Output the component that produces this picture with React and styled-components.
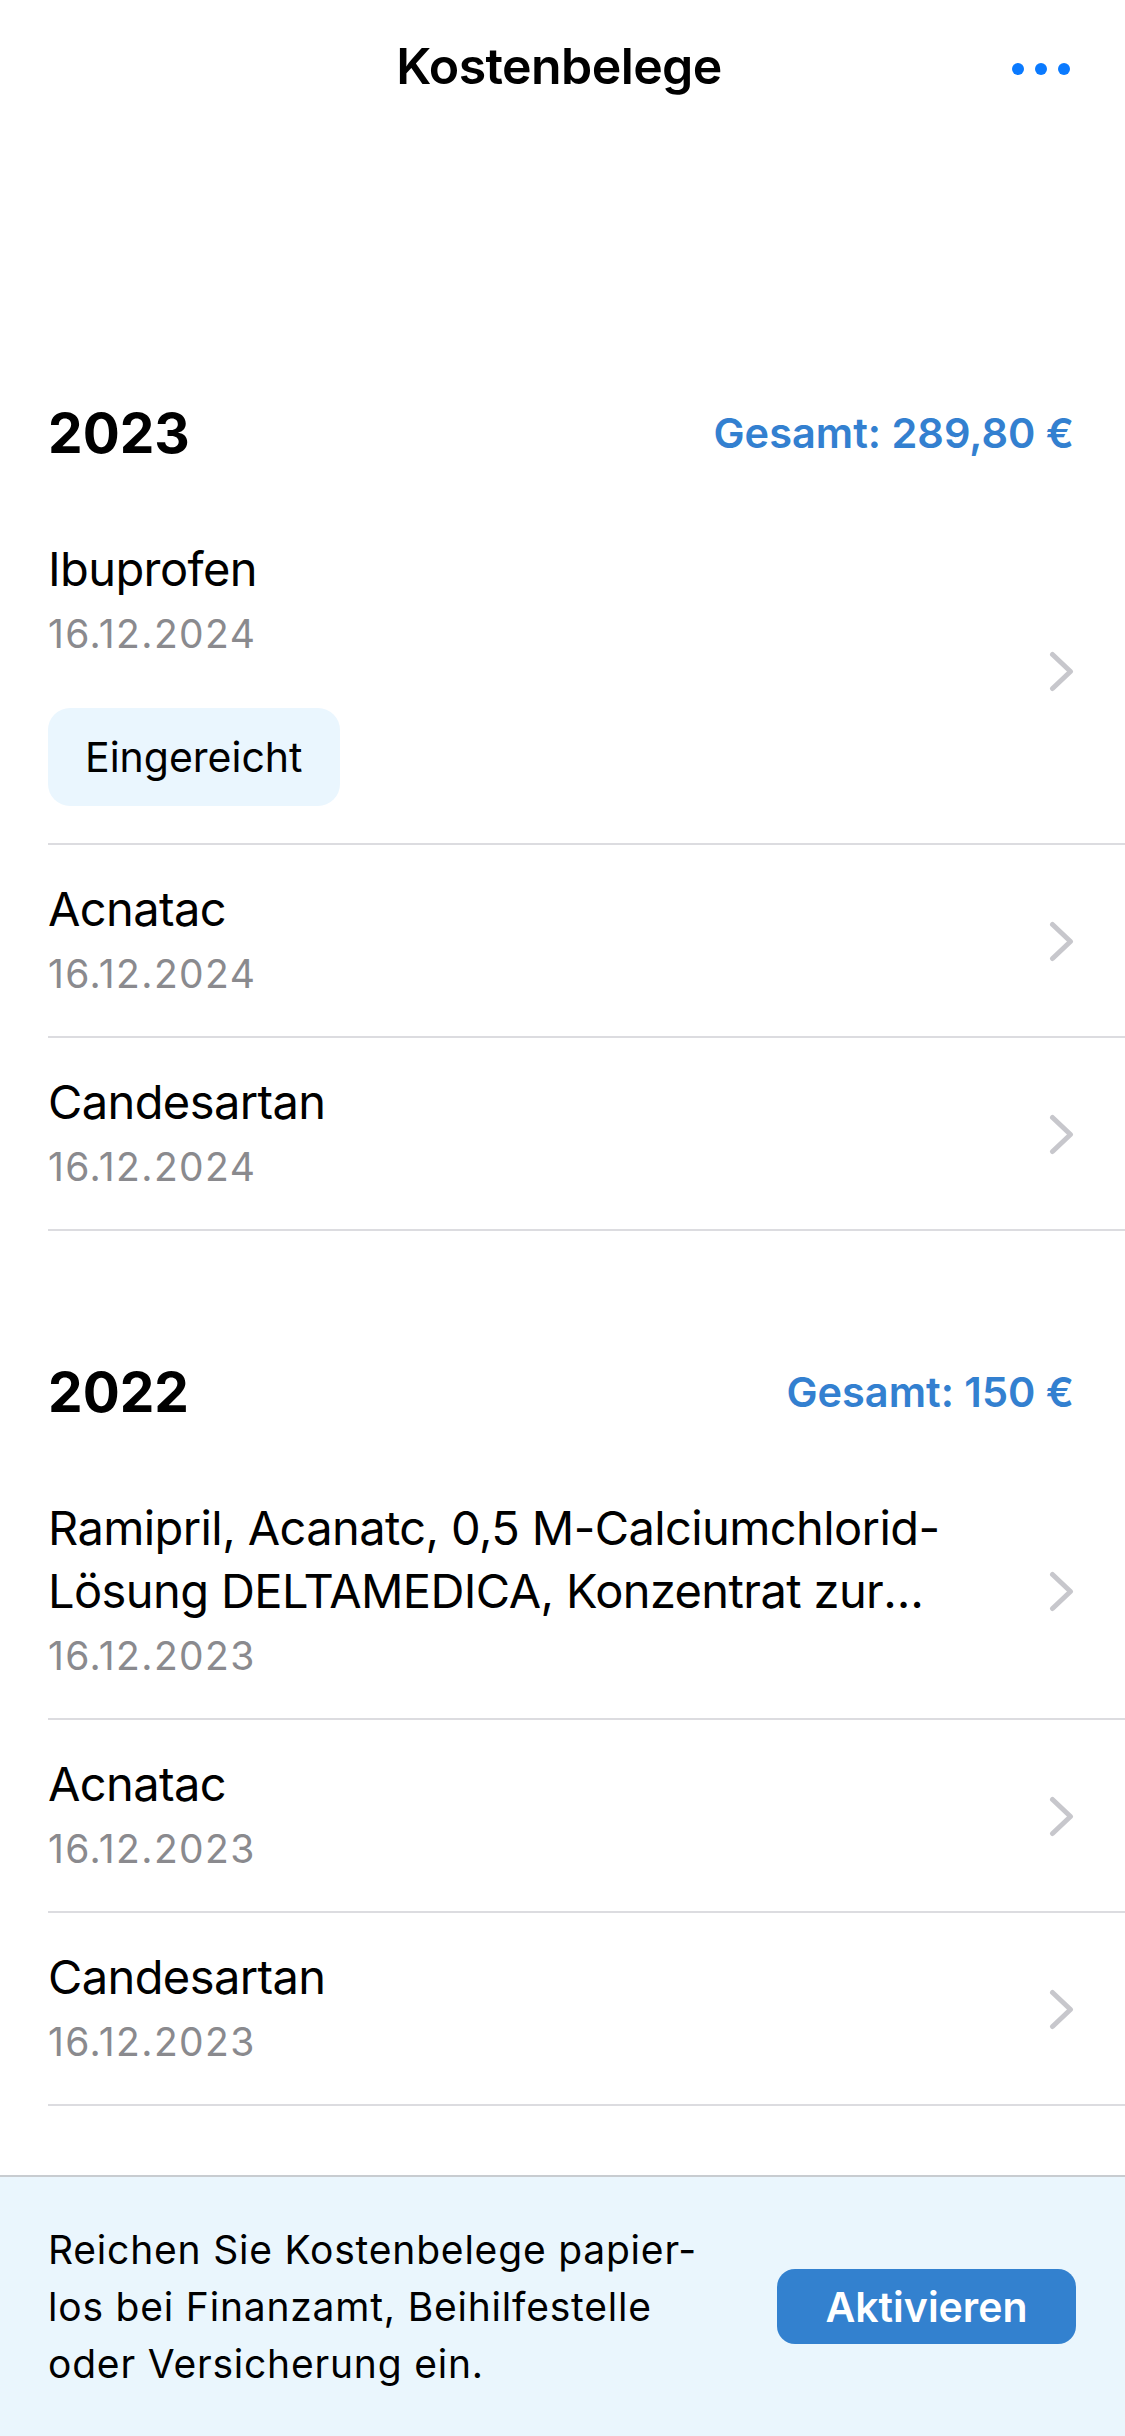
import React from "react";
import styled, { createGlobalStyle } from "styled-components";

const sections = [
  {
    year: "2023",
    total: "Gesamt: 289,80 €",
    items: [
      { name: "Ibuprofen", date: "16.12.2024", status: "Eingereicht" },
      { name: "Acnatac", date: "16.12.2024" },
      { name: "Candesartan", date: "16.12.2024" },
    ],
  },
  {
    year: "2022",
    total: "Gesamt: 150 €",
    items: [
      {
        name:
          "Ramipril, Acanatc, 0,5 M-Calciumchlorid-Lösung DELTAMEDICA, Konzentrat zur Herstellung einer Infusionslösung",
        date: "16.12.2023",
      },
      { name: "Acnatac", date: "16.12.2023" },
      { name: "Candesartan", date: "16.12.2023" },
    ],
  },
];

const Chevron = () => (
  <ChevronBox>
    <svg width="25" height="41" viewBox="0 0 25 41">
      <polyline
        points="3.5,3.5 21.5,20.5 3.5,37.5"
        fill="none"
        stroke="#C7C7CC"
        strokeWidth="5"
        strokeLinecap="round"
        strokeLinejoin="round"
      />
    </svg>
  </ChevronBox>
);

const App = () => {
  return (
    <Page>
      <GlobalStyle />
      <Header>
        <span />
        <Title>Kostenbelege</Title>
        <MoreButton aria-label="Mehr">
          <Dot />
          <Dot />
          <Dot />
        </MoreButton>
      </Header>

      <List>
        {sections.map((section) => (
          <Section key={section.year}>
            <SectionHeader>
              <Year>{section.year}</Year>
              <Total>{section.total}</Total>
            </SectionHeader>
            {section.items.map((item, i) => (
              <Row key={i} hasBadge={!!item.status}>
                <RowText>
                  <ItemName>{item.name}</ItemName>
                  <ItemDate>{item.date}</ItemDate>
                  {item.status && <Badge>{item.status}</Badge>}
                </RowText>
                <Chevron />
              </Row>
            ))}
          </Section>
        ))}
      </List>

      <Banner>
        <BannerText>
          Reichen Sie Kostenbelege papier-
          <br />
          los bei Finanzamt, Beihilfestelle
          <br />
          oder Versicherung ein.
        </BannerText>
        <ActivateButton>Aktivieren</ActivateButton>
      </Banner>
    </Page>
  );
};

export default App;

const GlobalStyle = createGlobalStyle`
  html, body {
    margin: 0;
    padding: 0;
    background: #ffffff;
  }
  body {
    font-family: Inter, "Noto Sans", "Liberation Sans", sans-serif;
    color: #000000;
    -webkit-font-smoothing: antialiased;
  }
`;

const Page = styled.div`
  width: 1125px;
  min-height: 2436px;
  display: flex;
  flex-direction: column;
  background: #ffffff;
`;

const Header = styled.header`
  display: grid;
  grid-template-columns: 1fr auto 1fr;
  align-items: center;
  padding: 36px 55px 0 48px;
`;

const Title = styled.h1`
  margin: 0;
  font-size: 50px;
  line-height: 60px;
  font-weight: 600;
  letter-spacing: -0.6px;
`;

const MoreButton = styled.div`
  justify-self: end;
  display: flex;
  gap: 11px;
  align-items: center;
  padding-top: 6px;
`;

const Dot = styled.span`
  width: 12px;
  height: 12px;
  border-radius: 50%;
  background: #0a7aff;
`;

const List = styled.main`
  display: flex;
  flex-direction: column;
  gap: 128px;
  padding: 304px 0 0 48px;
`;

const Section = styled.section`
  display: flex;
  flex-direction: column;
`;

const SectionHeader = styled.div`
  display: flex;
  align-items: center;
  justify-content: space-between;
  padding-right: 51px;
  margin-bottom: 39px;
`;

const Year = styled.h2`
  margin: 0;
  font-size: 55px;
  line-height: 66px;
  font-weight: 700;
`;

const Total = styled.span`
  font-size: 41.5px;
  line-height: 50px;
  font-weight: 600;
  color: #3380d0;
`;

const Row = styled.div`
  display: flex;
  align-items: center;
  gap: 40px;
  padding: ${({ hasBadge }) => (hasBadge ? "32px 51px 37px 0" : "32px 51px 31px 0")};
  border-bottom: 2px solid #dcdce0;
`;

const RowText = styled.div`
  flex: 1;
  min-width: 0;
  display: flex;
  flex-direction: column;
  align-items: flex-start;
`;

const ItemName = styled.div`
  font-size: 47px;
  line-height: 63px;
  font-weight: 400;
  letter-spacing: -0.6px;
  display: -webkit-box;
  -webkit-line-clamp: 2;
  -webkit-box-orient: vertical;
  overflow: hidden;
`;

const ItemDate = styled.div`
  margin-top: 3px;
  font-size: 39px;
  line-height: 62px;
  letter-spacing: 1.4px;
  color: #8a8a8e;
`;

const Badge = styled.div`
  margin-top: 43px;
  padding: 0 37px;
  height: 98px;
  display: flex;
  align-items: center;
  border-radius: 22px;
  background: #eaf6fe;
  font-size: 41px;
  color: #000000;
`;

const ChevronBox = styled.div`
  display: flex;
  flex-shrink: 0;
`;

const Banner = styled.footer`
  margin-top: auto;
  display: flex;
  align-items: center;
  justify-content: space-between;
  padding: 44px 49px 44px 48px;
  background: #eaf6fd;
  border-top: 2px solid #c8ccd0;
`;

const BannerText = styled.p`
  margin: 0;
  font-size: 39px;
  line-height: 57px;
  letter-spacing: 0.8px;
  color: #000000;
`;

const ActivateButton = styled.button`
  width: 299px;
  height: 75px;
  border: none;
  border-radius: 18px;
  background: #3381cf;
  color: #ffffff;
  font-family: inherit;
  font-size: 41px;
  font-weight: 600;
  padding: 0;
`;
